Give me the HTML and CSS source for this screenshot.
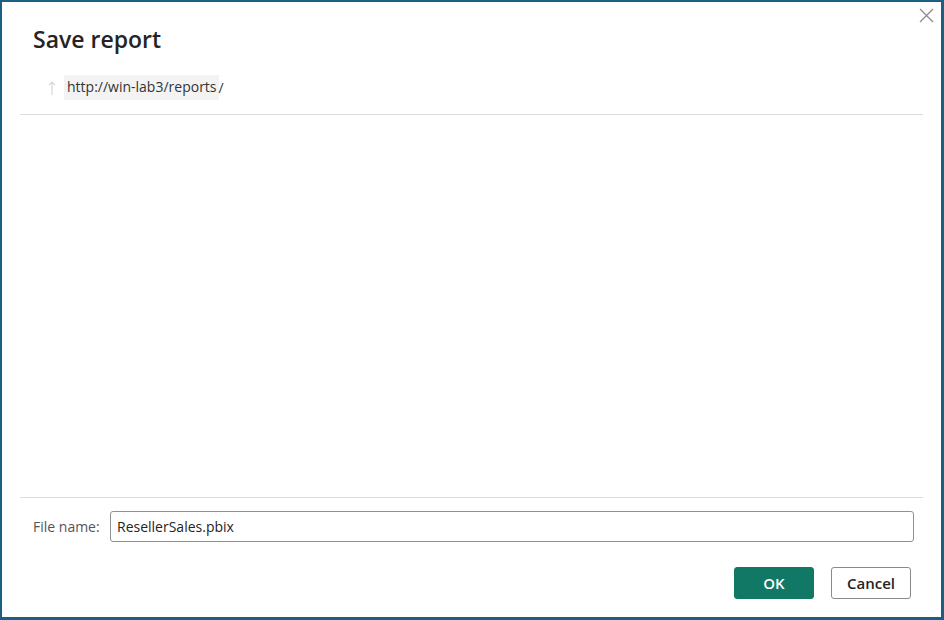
FILE: index.html
```html
<!DOCTYPE html>
<html>
<head>
    <link rel="stylesheet" href="styles.css">
</head>
<body>
    <div class="dialog">
        <button class="close" type="button" aria-label="Close">
            <svg width="15" height="15" viewBox="0 0 15 15"><path d="M1 1 L14 14 M14 1 L1 14" stroke="#8a8a8a" stroke-width="1.2" fill="none"/></svg>
        </button>

        <div class="header">
            <h2 class="title">Save report</h2>
            <div class="crumbs">
                <svg class="up" width="8" height="16" viewBox="0 0 8 16"><path d="M4 15 L4 2 M1 5 L4 2 L7 5" stroke="#d6d6d6" stroke-width="1.2" fill="none"/></svg>
                <span class="crumb">http://win-lab3/reports</span><span class="sep">/</span>
            </div>
        </div>

        <div class="browser"></div>

        <div class="footer">
            <div class="file-row">
                <label for="fileName">File name:</label>
                <input type="text" id="fileName" value="ResellerSales.pbix">
            </div>
            <div class="button-container">
                <button type="button" class="btn primary">OK</button>
                <button type="button" class="btn">Cancel</button>
            </div>
        </div>
    </div>
</body>
</html>
```

FILE: styles.css
```css
* {
    box-sizing: border-box;
}

body {
    margin: 0;
    font-family: "Open Sans", "Noto Sans", sans-serif;
    background-color: #fff;
    color: #252423;
}

.dialog {
    position: relative;
    width: 944px;
    height: 620px;
    display: flex;
    flex-direction: column;
    border-style: solid;
    border-color: #1d5f82;
    border-width: 2px 3px 3px 2px;
    padding: 0 18px 0 18px;
}

.close {
    position: absolute;
    top: 6px;
    right: 7px;
    background: none;
    border: none;
    padding: 0;
    cursor: pointer;
}

.header {
    padding: 0 0 0 13px;
    border-bottom: 1px solid #dcdcdc;
}

.title {
    margin: 22px 0 0 0;
    font-size: 23px;
    font-weight: 600;
    line-height: 30px;
    color: #252423;
}

.crumbs {
    display: flex;
    align-items: center;
    margin: 21px 0 14px 15px;
    font-size: 14px;
    color: #333;
}

.up {
    margin-right: 8px;
}

.crumb {
    background: #f3f3f3;
    padding: 2px 2px 3px 3px;
    line-height: 20px;
}

.sep {
    margin-left: 0;
}

.browser {
    flex: 1;
}

.footer {
    border-top: 1px solid #dcdcdc;
    padding: 13px 9px 18px 13px;
}

.file-row {
    display: flex;
    align-items: center;
}

label {
    font-size: 14px;
    color: #555;
    width: 77px;
}

input {
    flex: 1;
    height: 31px;
    font-family: inherit;
    font-size: 14px;
    color: #252423;
    padding: 0 6px;
    border: 1px solid #8f8f8f;
    border-radius: 3px;
    outline: none;
}

.button-container {
    display: flex;
    justify-content: flex-end;
    gap: 17px;
    margin-top: 25px;
    padding-right: 3px;
}

.btn {
    width: 80px;
    height: 32px;
    font-family: inherit;
    font-size: 15px;
    font-weight: 600;
    color: #252423;
    background: #fff;
    border: 1px solid #8a8a8a;
    border-radius: 3px;
    cursor: pointer;
}

.btn.primary {
    background: #117865;
    border-color: #117865;
    color: #fff;
}
```
